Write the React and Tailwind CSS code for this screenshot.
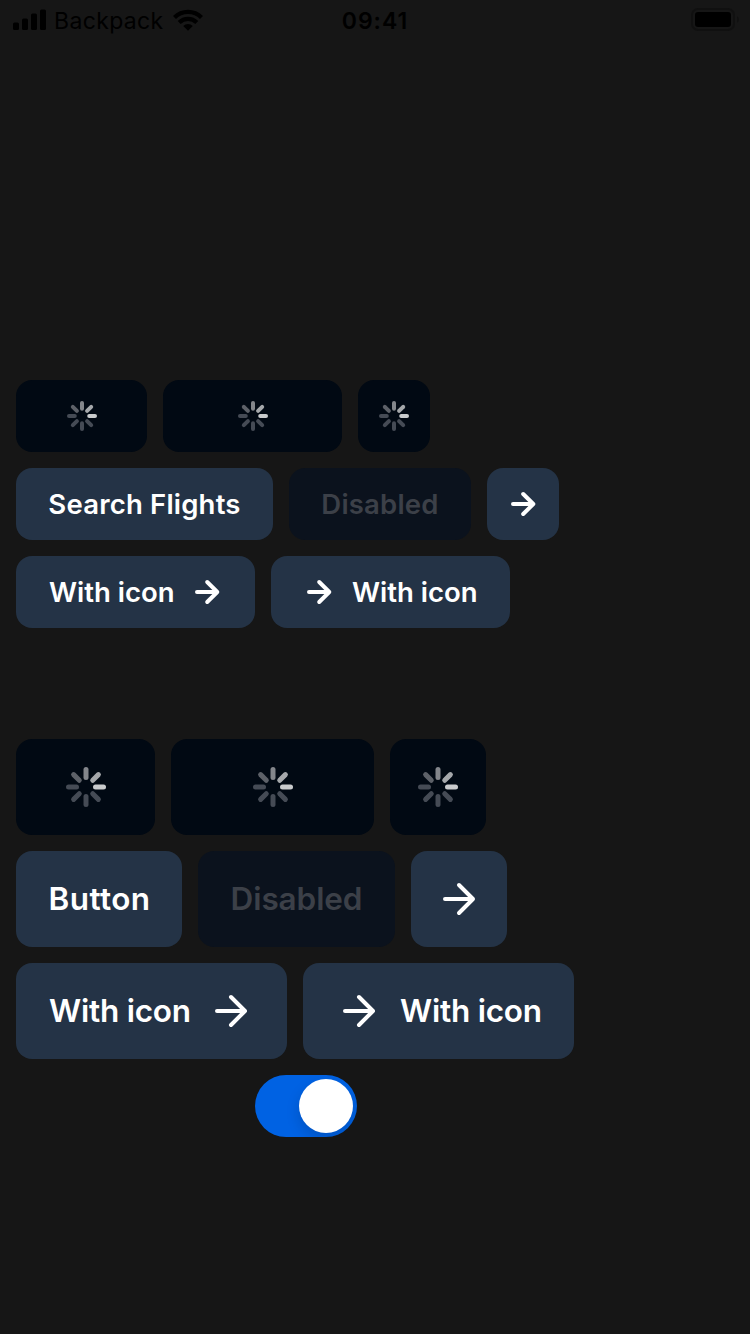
const SPOKES = [
  [0, '#c9cbcd'], [45, '#454b55'], [90, '#454b55'], [135, '#454b55'],
  [180, '#454b55'], [225, '#5d6168'], [270, '#83868b'], [315, '#a5a8ab'],
];

function Spinner({ large }) {
  const size = large ? 40 : 30;
  return (
    <svg width={size} height={size} viewBox={large ? '-20 -20 40 40' : '-15 -15 30 30'}>
      {SPOKES.map(([angle, color]) => (
        <line key={angle} x1={large ? 9.5 : 7.2} x2={large ? 17.5 : 13} y1="0" y2="0" stroke={color}
          strokeWidth={large ? 5 : 4} strokeLinecap="round" transform={`rotate(${angle})`} />
      ))}
    </svg>
  );
}

function Arrow({ large }) {
  const size = large ? 48 : 32;
  return (
    <svg width={size} height={size} className="shrink-0" fill="none" stroke="#fff" strokeWidth="4" strokeLinecap="round" strokeLinejoin="round">
      {large ? <path d="M10 24H38M24 10L38 24L24 38" /> : <path d="M6 16H26M16.2 6L26.3 16L16.2 26" />}
    </svg>
  );
}

function Button({ large, kind = 'normal', width, children }) {
  const tone = {
    normal: 'bg-[#243346] text-white',
    loading: 'bg-[#010913]',
    disabled: 'bg-[#0b121d] text-[#3c4048]',
  }[kind];
  return (
    <button disabled={kind !== 'normal'} className={`flex shrink-0 items-center justify-center gap-4 rounded-2xl font-semibold whitespace-nowrap ${large ? 'h-24 text-[31.5px]' : 'h-[72px] text-[27.5px]'} ${tone} ${width}`}>
      {children}
    </button>
  );
}

function StatusBar() {
  return (
    <header className="grid h-10 grid-cols-[minmax(0,1fr)_auto_minmax(0,1fr)] items-center text-[23px] text-black">
      <div className="flex items-center pl-[13px]">
        <svg width="34" height="22" viewBox="0 0 34 22">
          <rect x="0" y="13.5" width="6" height="7.5" rx="1.5" />
          <rect x="9" y="9.5" width="6" height="11.5" rx="1.5" />
          <rect x="18" y="4.5" width="6" height="16.5" rx="1.5" />
          <rect x="27" y="0.5" width="6" height="20.5" rx="1.5" />
        </svg>
        <span className="ml-[7px] w-[109px] pt-0.5 tracking-[0.35px]">Backpack</span>
        <svg width="30" height="22" viewBox="0 0 30 22" className="ml-[10px]" fill="none" stroke="#000" strokeWidth="4.2">
          <path d="M1.5 8.5A19 19 0 0 1 28.5 8.5" />
          <path d="M6.2 13.5A12.5 12.5 0 0 1 23.8 13.5" />
          <path d="M15 21.7L10.2 17A6.8 6.8 0 0 1 19.8 17Z" fill="#000" stroke="none" />
        </svg>
      </div>
      <span className="pt-0.5 font-semibold tracking-[1px]">09:41</span>
      <svg width="48" height="24" className="mr-[11px] justify-self-end">
        <rect x="1" y="1" width="42" height="21" rx="6" fill="none" stroke="#101010" strokeWidth="2" />
        <rect x="4" y="4" width="36" height="15" rx="3" />
        <path d="M46 8q2 1.5 2 3.5t-2 3.5z" fill="#101010" />
      </svg>
    </header>
  );
}

export default function App() {
  return (
    <main className="flex h-[1334px] w-[750px] flex-col overflow-hidden bg-[#161616] font-['Inter',sans-serif]">
      <StatusBar />
      <section className="mt-[340px] flex flex-col gap-4 pl-4">
        <div className="flex gap-4">
          <Button kind="loading" width="w-[131px]"><Spinner /></Button>
          <Button kind="loading" width="w-[179px]"><Spinner /></Button>
          <Button kind="loading" width="w-[72px]"><Spinner /></Button>
        </div>
        <div className="flex gap-4">
          <Button width="w-[257px]"><span className="pt-0.5 tracking-[0.2px]">Search Flights</span></Button>
          <Button kind="disabled" width="w-[182px]"><span className="pt-0.5 tracking-[0.2px]">Disabled</span></Button>
          <Button width="w-[72px]"><Arrow /></Button>
        </div>
        <div className="flex gap-4">
          <Button width="w-[239px]"><span className="w-[127px] pt-0.5 pl-px text-left">With icon</span><Arrow /></Button>
          <Button width="w-[239px]"><Arrow /><span className="w-[127px] pt-0.5 pl-px text-left">With icon</span></Button>
        </div>
      </section>
      <section className="mt-[111px] flex flex-col gap-4 pl-4">
        <div className="flex gap-4">
          <Button large kind="loading" width="w-[139px]"><Spinner large /></Button>
          <Button large kind="loading" width="w-[203px]"><Spinner large /></Button>
          <Button large kind="loading" width="w-24"><Spinner large /></Button>
        </div>
        <div className="flex gap-4">
          <Button large width="w-[166px]"><span className="pl-px tracking-[0.4px]">Button</span></Button>
          <Button large kind="disabled" width="w-[197px]"><span className="tracking-[-0.1px]">Disabled</span></Button>
          <Button large width="w-24"><Arrow large /></Button>
        </div>
        <div className="flex gap-4">
          <Button large width="w-[271px]"><span className="w-[143px] pl-px text-left tracking-[-0.22px]">With icon</span><Arrow large /></Button>
          <Button large width="w-[271px]"><Arrow large /><span className="w-[143px] pl-px text-left tracking-[-0.22px]">With icon</span></Button>
        </div>
      </section>
      <button role="switch" aria-checked="true" className="mt-4 ml-[255px] flex h-[62px] w-[102px] items-center justify-end overflow-hidden rounded-full bg-[#0062e3] pr-1">
        <span className="size-[54px] rounded-full bg-white shadow-[0_6px_14px_rgba(0,0,0,0.15)]" />
      </button>
    </main>
  );
}
